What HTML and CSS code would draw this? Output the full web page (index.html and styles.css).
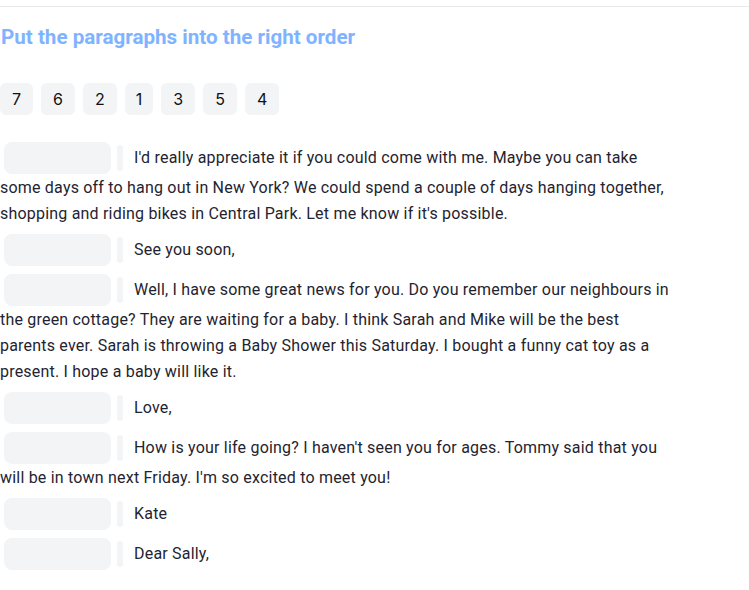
FILE: index.html
```html
<!DOCTYPE html>
<html lang="en">
<head>
<meta charset="utf-8">
<title>Put the paragraphs into the right order</title>
<link rel="stylesheet" href="styles.css">
</head>
<body>
<div class="page">
  <div class="topline"></div>
  <h1 class="title">Put the paragraphs into the right order</h1>
  <div class="chips">
    <span class="chip">7</span>
    <span class="chip">6</span>
    <span class="chip">2</span>
    <span class="chip chip-narrow">1</span>
    <span class="chip">3</span>
    <span class="chip">5</span>
    <span class="chip">4</span>
  </div>
  <div class="rows">
    <p class="row"><span class="slot"></span><span class="bar"></span><span class="txt">I'd really appreciate it if you could come with me. Maybe you can take some days off to hang out in New York? We could spend a couple of days hanging together, shopping and riding bikes in Central Park. Let me know if it's possible.</span></p>
    <p class="row"><span class="slot"></span><span class="bar"></span><span class="txt">See you soon,</span></p>
    <p class="row"><span class="slot"></span><span class="bar"></span><span class="txt">Well, I have some great news for you. Do you remember our neighbours in the green cottage? They are waiting for a baby. I think Sarah and Mike will be the best parents ever. Sarah is throwing a Baby Shower this Saturday. I bought a funny cat toy as a present. I hope a baby will like it.</span></p>
    <p class="row"><span class="slot"></span><span class="bar"></span><span class="txt">Love,</span></p>
    <p class="row"><span class="slot"></span><span class="bar"></span><span class="txt">How is your life going? I haven't seen you for ages. Tommy said that you will be in town next Friday. I'm so excited to meet you!</span></p>
    <p class="row"><span class="slot"></span><span class="bar"></span><span class="txt">Kate</span></p>
    <p class="row"><span class="slot"></span><span class="bar"></span><span class="txt">Dear Sally,</span></p>
  </div>
</div>
</body>
</html>
```

FILE: styles.css
```css
html, body {
  margin: 0;
  padding: 0;
  background: #ffffff;
}

body {
  font-family: Roboto, "Liberation Sans", sans-serif;
  color: #1f2430;
}

.page {
  padding-top: 6px;
}

.topline {
  height: 1px;
  background: #e8e8e8;
}

.title {
  margin: 18px 0 0 1px;
  font-size: 20.6px;
  line-height: 24px;
  font-weight: 700;
  color: #80b3ff;
}

.chips {
  display: flex;
  gap: 8px;
  margin-top: 34px;
}

.chip {
  height: 32px;
  padding: 0 12px;
  border-radius: 6px;
  background: #f3f4f6;
  display: flex;
  align-items: center;
  justify-content: center;
  font-family: Inter, sans-serif;
  font-size: 16px;
  color: #111111;
}

.chip-narrow {
  padding: 0 11px;
}

.rows {
  margin-top: 27px;
  width: 674px;
}

.row {
  margin: 0 0 8px 0;
  font-size: 16px;
  line-height: 26px;
  letter-spacing: 0.2px;
}

.txt {
  position: relative;
  top: 1px;
}

.slot {
  display: inline-block;
  vertical-align: middle;
  width: 107px;
  height: 32px;
  margin-left: 4px;
  border-radius: 8px;
  background: #f3f4f6;
}

.bar {
  display: inline-block;
  vertical-align: middle;
  width: 6px;
  height: 26px;
  margin: 0 11px 0 6px;
  border-radius: 3px;
  background: #f3f4f6;
}
```
